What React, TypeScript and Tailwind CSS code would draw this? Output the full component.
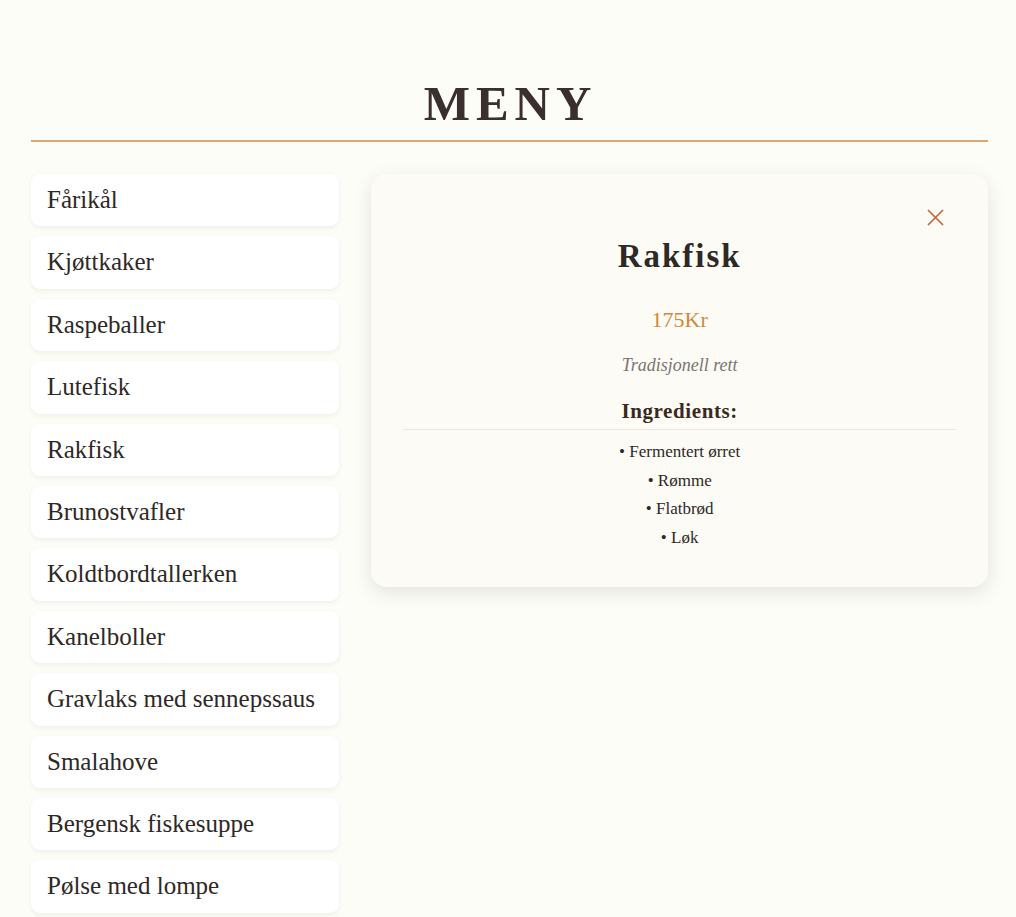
import React from "react";

const items = [
  "Fårikål",
  "Kjøttkaker",
  "Raspeballer",
  "Lutefisk",
  "Rakfisk",
  "Brunostvafler",
  "Koldtbordtallerken",
  "Kanelboller",
  "Gravlaks med sennepssaus",
  "Smalahove",
  "Bergensk fiskesuppe",
  "Pølse med lompe",
];

const ingredients = ["Fermentert ørret", "Rømme", "Flatbrød", "Løk"];

export default function App() {
  return (
    <div className="min-h-screen bg-[#fdfdf8] font-['Liberation_Serif',serif] text-[#2e2826]">
      <div className="pl-[31px] pr-[28px] pt-[76px] pb-[4px]">
        <h1 className="pl-[2px] pb-[8px] text-center text-[49px] leading-[56px] font-bold tracking-[6px] text-[#3a2e2e] border-b-2 border-[#d9a877]">
          MENY
        </h1>
        <div className="mt-[32px] grid grid-cols-[1fr_2fr] gap-[32px] items-start">
          <ul className="flex flex-col gap-[10px]">
            {items.map((it) => (
              <li
                key={it}
                className="rounded-[9px] bg-white px-[16px] py-[12px] text-[25px] leading-[28.4px] shadow-[0_2px_5px_rgba(0,0,0,0.06)]"
              >
                {it}
              </li>
            ))}
          </ul>
          <div className="relative rounded-[16px] bg-[#fdfbf6] px-[32px] pt-[32px] pb-[35px] text-center shadow-[0_6px_20px_rgba(0,0,0,0.10)]">
            <button className="absolute top-[35px] right-[44px] h-[17px] w-[17px]">
              <svg viewBox="0 0 17 17" width="17" height="17">
                <path d="M1 1 L16 16 M16 1 L1 16" stroke="#c4623a" strokeWidth="1.6" fill="none" />
              </svg>
            </button>
            <h2 className="mt-[30px] text-[33px] leading-[40px] font-bold tracking-[2px] text-[#2e2826]">
              Rakfisk
            </h2>
            <div className="mt-[30px] text-[22px] leading-[28px] text-[#d0883a]">175Kr</div>
            <div className="mt-[19px] text-[18px] leading-[24px] italic text-[#7a7570]">
              Tradisjonell rett
            </div>
            <div className="mt-[21px] text-[21px] leading-[26px] font-bold tracking-[0.6px] text-[#3a2a1e]">
              Ingredients:
            </div>
            <div className="mt-[5px] h-px bg-[#ebe6de]" />
            <ul className="mt-[8px]">
              {ingredients.map((i) => (
                <li key={i} className="text-[17px] leading-[28.5px] text-[#2e2826]">
                  • {i}
                </li>
              ))}
            </ul>
          </div>
        </div>
      </div>
    </div>
  );
}
